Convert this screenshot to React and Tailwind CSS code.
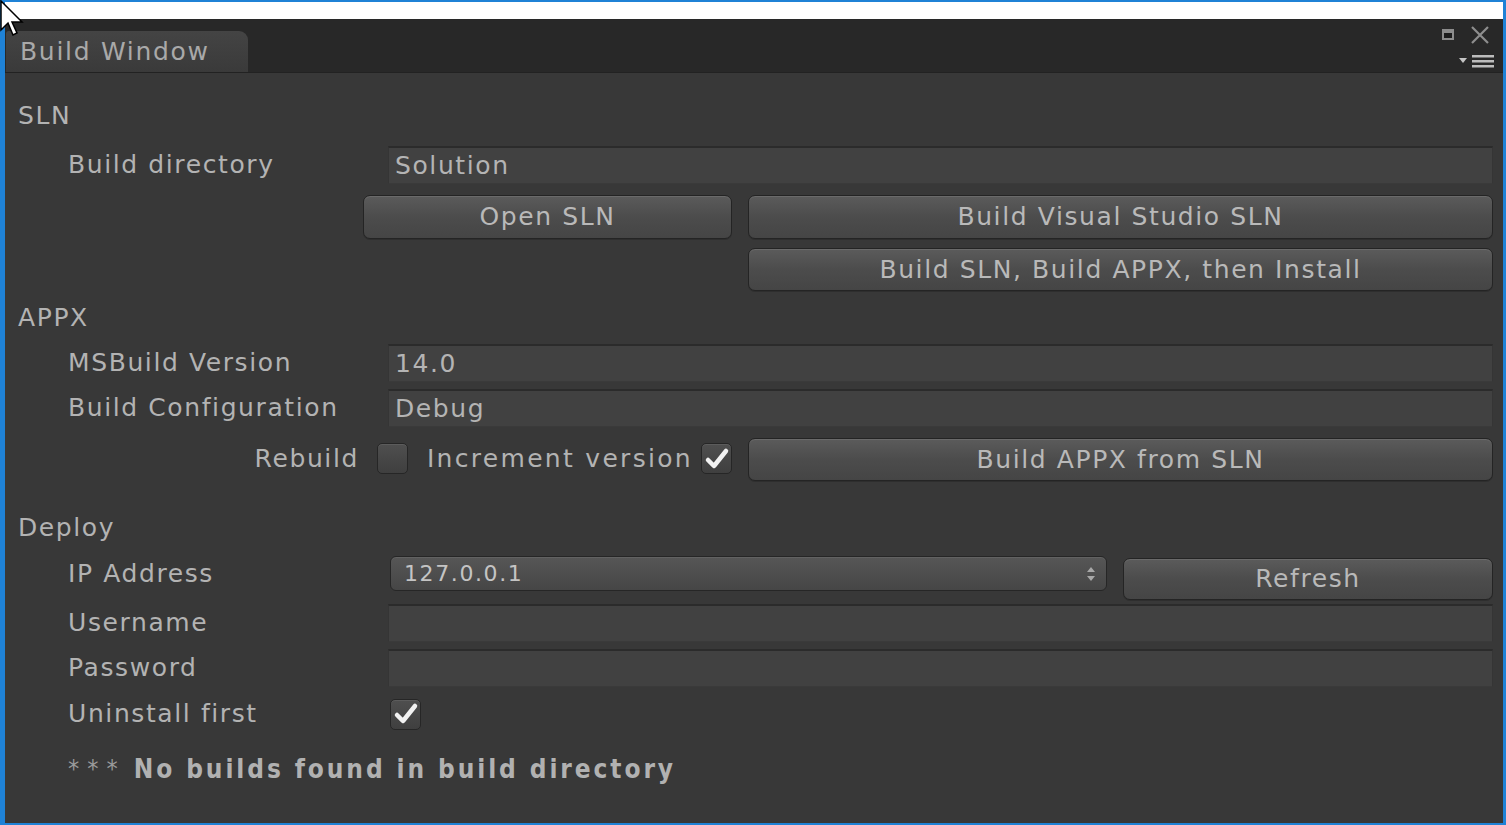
import React from 'react';

const font = { fontFamily: '"DejaVu Sans", Verdana, sans-serif' };

function Field({ value }) {
    return (
        <div className="flex-1 h-full bg-[#414141] border-t-2 border-[#2b2b2b] border-x border-b border-x-[#353535] border-b-[#3a3a3a] flex items-center pl-[6px] text-[#b4b4b4]">
            {value}
        </div>
    );
}

function Button({ children, className = '' }) {
    return (
        <div className={`h-full rounded-[7px] border border-[#242424] bg-gradient-to-b from-[#5b5b5b] via-[#4c4c4c] to-[#454545] shadow-[inset_0_1px_0_#6a6a6a,0_1px_0_#2e2e2e] flex items-center justify-center text-[#b9b9b9] ${className}`}>
            {children}
        </div>
    );
}

function Checkbox({ checked }) {
    return (
        <div className="w-[31px] h-[31px] rounded-[5px] border border-[#262626] bg-gradient-to-b from-[#4f4f4f] to-[#3f3f3f] shadow-[inset_0_1px_0_#5c5c5c] flex items-center justify-center">
            {checked && (
                <svg width="26" height="24" viewBox="0 0 26 24">
                    <path d="M4 13 L10 19 L22 4" fill="none" stroke="#f2f2f2" strokeWidth="4.5" strokeLinecap="round" strokeLinejoin="round" />
                </svg>
            )}
        </div>
    );
}

function Label({ children }) {
    return <div className="w-[370px] pl-[50px] shrink-0">{children}</div>;
}

function Header({ children, className = '' }) {
    return <div className={`h-[36px] flex items-center ${className}`}>{children}</div>;
}

export default function App() {
    return (
        <div className="w-[1506px] h-[825px] bg-[#1f82d6] pt-[2px] pb-[2px] pl-[3px] pr-[1px] relative overflow-hidden" style={font}>
            <div className="h-full flex flex-col border-l-2 border-[#1f82d6] bg-[#383838] mr-[2px]">
                <div className="h-[17px] bg-white shrink-0" />
                {/* tab bar */}
                <div className="h-[54px] bg-[#282828] shrink-0 flex items-end relative border-b border-[#222]">
                    <div className="ml-[1px] w-[242px] h-[41px] rounded-tr-[9px] rounded-tl-[3px] bg-gradient-to-b from-[#444] to-[#3a3a3a] flex items-center pl-[14px] text-[25px] tracking-[1.7px] text-[#a9a9a9]">
                        Build Window
                    </div>
                    <div className="absolute right-[49px] top-[10px] w-[12px] h-[11px] border-2 border-[#8c8c8c] bg-[#1c1c1c] border-t-[4px]" />
                    <svg className="absolute right-[13px] top-[7px]" width="20" height="19" viewBox="0 0 20 19">
                        <path d="M2 1 L18 17 M18 1 L2 17" stroke="#8e8e8e" strokeWidth="2.2" />
                    </svg>
                    <svg className="absolute right-[8px] top-[36px]" width="36" height="13" viewBox="0 0 36 13">
                        <path d="M0 3 L8 3 L4 8 Z" fill="#c4c4c4" />
                        <rect x="13" y="0" width="22" height="2.5" fill="#bcbcbc" />
                        <rect x="13" y="5" width="22" height="2.5" fill="#bcbcbc" />
                        <rect x="13" y="10" width="22" height="2.5" fill="#bcbcbc" />
                    </svg>
                </div>

                {/* body */}
                <div className="flex flex-col pl-[13px] pr-[10px] text-[25px] tracking-[1.6px] text-[#b3b3b3]">
                    <Header className="mt-[25px]">SLN</Header>
                    <div className="h-[38px] mt-[12px] flex items-center">
                        <Label>Build directory</Label>
                        <Field value="Solution" />
                    </div>
                    <div className="h-[44px] mt-[11px] flex gap-[16px] pl-[345px]">
                        <Button className="w-[369px]">Open SLN</Button>
                        <Button className="flex-1">Build Visual Studio SLN</Button>
                    </div>
                    <div className="h-[43px] mt-[9px] flex pl-[730px]">
                        <Button className="flex-1">Build SLN, Build APPX, then Install</Button>
                    </div>

                    <Header className="mt-[9px]">APPX</Header>
                    <div className="h-[38px] mt-[8px] flex items-center">
                        <Label>MSBuild Version</Label>
                        <Field value="14.0" />
                    </div>
                    <div className="h-[38px] mt-[7px] flex items-center">
                        <Label>Build Configuration</Label>
                        <Field value="Debug" />
                    </div>
                    <div className="h-[45px] mt-[9px] flex items-center">
                        <div className="w-[714px] shrink-0 flex items-center justify-end">
                            <span>Rebuild</span>
                            <div className="ml-[18px]"><Checkbox checked={false} /></div>
                            <span className="ml-[19px] tracking-[2.3px]">Increment version</span>
                            <div className="ml-[8px]"><Checkbox checked /></div>
                        </div>
                        <div className="ml-[16px] flex-1 h-[43px] self-end">
                            <Button className="w-full">Build APPX from SLN</Button>
                        </div>
                    </div>

                    <Header className="mt-[29px]">Deploy</Header>
                    <div className="h-[44px] mt-[10px] flex">
                        <Label><div className="h-[36px] flex items-center">IP Address</div></Label>
                        <div className="ml-[2px] w-[717px] h-[35px] rounded-[6px] border border-[#262626] bg-gradient-to-b from-[#565656] to-[#464646] shadow-[inset_0_1px_0_#626262] flex items-center justify-between pl-[13px] pr-[10px] text-[#c4c4c4] text-[22px]">
                            <span>127.0.0.1</span>
                            <svg width="10" height="16" viewBox="0 0 10 16">
                                <path d="M1 6 L5 1 L9 6 Z M1 10 L5 15 L9 10 Z" fill="#a8a8a8" />
                            </svg>
                        </div>
                        <div className="ml-[16px] flex-1 h-[42px] self-end">
                            <Button className="w-full">Refresh</Button>
                        </div>
                    </div>
                    <div className="h-[38px] mt-[4px] flex items-center">
                        <Label>Username</Label>
                        <Field value="" />
                    </div>
                    <div className="h-[38px] mt-[7px] flex items-center">
                        <Label>Password</Label>
                        <Field value="" />
                    </div>
                    <div className="h-[36px] mt-[9px] flex items-center">
                        <Label>Uninstall first</Label>
                        <div className="ml-[2px]"><Checkbox checked /></div>
                    </div>
                    <div className="h-[36px] mt-[19px] flex items-center pl-[50px] tracking-[2.9px] font-bold text-[26px] text-[#b1b1b1]" style={{ fontFamily: '"DejaVu Sans Condensed", "DejaVu Sans", sans-serif', fontStretch: 'condensed' }}>
                        <span className="font-normal text-[#9a9a9a] text-[25px] tracking-[8px] mr-[8px]">***</span>
                        No builds found in build directory
                    </div>
                </div>
            </div>

            {/* mouse pointer */}
            <svg className="absolute left-0 top-0" width="30" height="40" viewBox="0 0 30 40">
                <path d="M1 1 L1 30 L8 23 L13 35 L17 33 L12 22 L22 22 Z" fill="#ffffff" stroke="#000000" strokeWidth="1.5" strokeLinejoin="miter" />
            </svg>
        </div>
    );
}
